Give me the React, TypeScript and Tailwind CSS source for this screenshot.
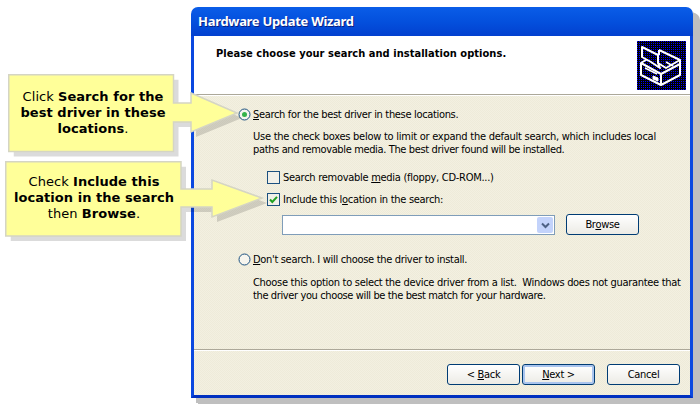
const uiFont = "font-['Tahoma','DejaVu_Sans_Condensed','Liberation_Sans',sans-serif] text-[11px] leading-[13px] text-black";
const calloutFont = "font-['Verdana','DejaVu_Sans',sans-serif] text-[13px] leading-[16px] tracking-[0.05px] text-black text-center";

function Radio({ checked }: { checked?: boolean }) {
  return (
    <svg width="13" height="13" viewBox="0 0 13 13" className="shrink-0">
      <circle cx="6.5" cy="6.5" r="5.5" fill="#f6f5ee" stroke="#1c5180" />
      {checked && <circle cx="6.5" cy="6.5" r="2.5" fill="#35b34a" />}
    </svg>
  );
}

function Check({ checked }: { checked?: boolean }) {
  return (
    <svg width="13" height="13" viewBox="0 0 13 13" className="shrink-0">
      <rect x="0.5" y="0.5" width="12" height="12" fill="#f1f0e8" stroke="#1c5180" />
      {checked && <path d="M3 6.5 L5.3 9 L10 3.8" fill="none" stroke="#21a121" strokeWidth="2" />}
    </svg>
  );
}

function XpButton({ children, focused, className }: { children: React.ReactNode; focused?: boolean; className?: string }) {
  return (
    <div
      className={`w-[73px] h-[21px] flex items-center justify-center rounded-[3px] border border-[#003c74] bg-gradient-to-b from-white to-[#ecebe5] ${focused ? 'shadow-[inset_0_0_0_2px_#a9c4ee]' : ''} ${className ?? ''}`}
    >
      <span className="whitespace-pre tracking-[-0.3px]">{children}</span>
    </div>
  );
}

function DeviceIcon() {
  return (
    <svg width="49" height="49" viewBox="0 0 49 49" className="shrink-0">
      <defs>
        <pattern id="dith" width="2" height="2" patternUnits="userSpaceOnUse">
          <rect width="2" height="2" fill="#000" />
          <rect width="1" height="1" fill="#0000ff" />
        </pattern>
      </defs>
      <rect width="49" height="49" fill="url(#dith)" />
      <g fill="none" stroke="#fff" strokeWidth="2" strokeLinejoin="round">
        <path d="M22 9 L43 19 L43 34 L24 44 L4 34 L4 22 L12 17" />
        <path d="M22 9 L22 14 M21 22 L29 27 L43 19" />
        <path d="M4 22 L24 33 L24 44 M24 33 L43 23" />
        <path d="M5 6 L21 14 L21 22 L23 27 L14 21 L5 16 Z" fill="url(#dith)" />
        <path d="M8 27 L20 33" strokeWidth="1.5" />
        <path d="M29 21 L36 25" strokeWidth="1.5" />
        <path d="M16 35 L21 37 L21 40 L16 38 Z" fill="#fff" strokeWidth="1" />
      </g>
    </svg>
  );
}

function CalloutShape({ width, height, d }: { width: number; height: number; d: string }) {
  return (
    <svg width={width} height={height} className="absolute left-0 top-0">
      <path d={d} transform="translate(5 5)" fill="#000" opacity="0.14" />
      <path d={d} fill="#ffff99" stroke="#d5d5c4" strokeWidth="1.5" />
    </svg>
  );
}

export default function App() {
  return (
    <div className="relative w-[700px] h-[406px] bg-white overflow-hidden pl-[191px] pt-[7px]">
      {/* dialog */}
      <div className={`w-[502px] h-[391px] flex flex-col rounded-t-[7px] shadow-[5px_5px_0_#bfbfbf,7px_6px_0_#bfbfbf] ${uiFont}`}>
        <div className="h-[29px] shrink-0 rounded-t-[7px] bg-gradient-to-b from-[#0a5de8] via-[#0450dd] to-[#0340cf] flex items-center pl-[7px] font-['Trebuchet_MS','Noto_Sans',sans-serif] font-bold text-[13px] tracking-[-0.3px] text-white [text-shadow:1px_1px_0_#0a1f80]">
          Hardware Update Wizard
        </div>
        <div className="flex-1 flex flex-col min-h-0 border-x-[3px] border-b-[3px] border-x-[#0a48e0] border-b-[#0030c0] bg-[repeating-conic-gradient(#f3f0e1_0_25%,#eeebd9_0_50%)] bg-[length:2px_2px]">
          <div className="h-[58px] shrink-0 bg-white flex justify-between pl-[22px] pr-[4px] pt-[5px]">
            <div className="font-bold mt-[6px] tracking-[0.04px]">Please choose your search and installation options.</div>
            <DeviceIcon />
          </div>
          <div className="h-[2px] shrink-0 bg-[#aca899] border-b border-white" />

          <div className="flex-1 pl-[44px] pr-[10px] pt-[12px]">
            <div className="flex items-center gap-[2px] h-[13px]">
              <Radio checked />
              <span className="tracking-[-0.33px]"><u>S</u>earch for the best driver in these locations.</span>
            </div>
            <div className="ml-[15px] mt-[9px] whitespace-nowrap">
              <div className="tracking-[-0.25px]">Use the check boxes below to limit or expand the default search, which includes local</div>
              <div className="tracking-[-0.36px]">paths and removable media. The best driver found will be installed.</div>
            </div>
            <div className="ml-[29px] mt-[15px] flex items-center gap-[3px] h-[13px]">
              <Check />
              <span className="tracking-[-0.28px]">Search removable <u>m</u>edia (floppy, CD-ROM...)</span>
            </div>
            <div className="ml-[29px] mt-[9px] flex items-center gap-[3px] h-[13px]">
              <Check checked />
              <span className="tracking-[-0.29px]">Include this l<u>o</u>cation in the search:</span>
            </div>
            <div className="ml-[44px] mt-[8px] flex items-start gap-[11px]">
              <div className="w-[273px] h-[20px] mt-[1px] bg-white border border-[#7f9db9] flex justify-end items-center pr-[1px]">
                <div className="w-[16px] h-[16px] rounded-[2px] bg-[#c3d3fb] flex items-center justify-center">
                  <svg width="9" height="7" viewBox="0 0 9 7">
                    <path d="M1 1.5 L4.5 5 L8 1.5" fill="none" stroke="#4d6185" strokeWidth="2" />
                  </svg>
                </div>
              </div>
              <XpButton>Br<u>o</u>wse</XpButton>
            </div>
            <div className="mt-[18px] flex items-center gap-[2px] h-[13px]">
              <Radio />
              <span className="tracking-[-0.32px]"><u>D</u>on't search. I will choose the driver to install.</span>
            </div>
            <div className="ml-[15px] mt-[10px] whitespace-nowrap">
              <div className="tracking-[-0.3px]">Choose this option to select the device driver from a list. &nbsp;Windows does not guarantee that</div>
              <div className="tracking-[-0.38px]">the driver you choose will be the best match for your hardware.</div>
            </div>
          </div>

          <div className="h-[2px] shrink-0 bg-[#aca899] border-b border-white" />
          <div className="h-[44px] shrink-0 flex items-start justify-end pt-[13px] pr-[10px]">
            <XpButton>{'< '}<u>B</u>ack</XpButton>
            <XpButton focused className="ml-[2px]"><u>N</u>ext {'>'}</XpButton>
            <XpButton className="ml-[12px]">Cancel</XpButton>
          </div>
        </div>
      </div>

      {/* callout 1 */}
      <div className="absolute left-[8px] top-[74px] w-[240px] h-[90px]">
        <CalloutShape width={240} height={90} d="M0.75 0.75 H165.5 V29 H183 V19 L229 39 L183 58 V48 H165.5 V77.5 H0.75 Z" />
        <div className={`absolute left-[2px] top-[15px] w-[166px] ${calloutFont}`}>
          Click <b>Search for the best driver in these locations</b>.
        </div>
      </div>

      {/* callout 2 */}
      <div className="absolute left-[5px] top-[161px] w-[265px] h-[85px]">
        <CalloutShape width={265} height={85} d="M0.75 0.75 H176 V28 H207 V19 L257 37 L207 56 V46 H176 V75 H0.75 Z" />
        <div className={`absolute left-[1px] top-[13px] w-[176px] ${calloutFont}`}>
          Check <b>Include this location in the search</b> then <b>Browse</b>.
        </div>
      </div>
    </div>
  );
}
